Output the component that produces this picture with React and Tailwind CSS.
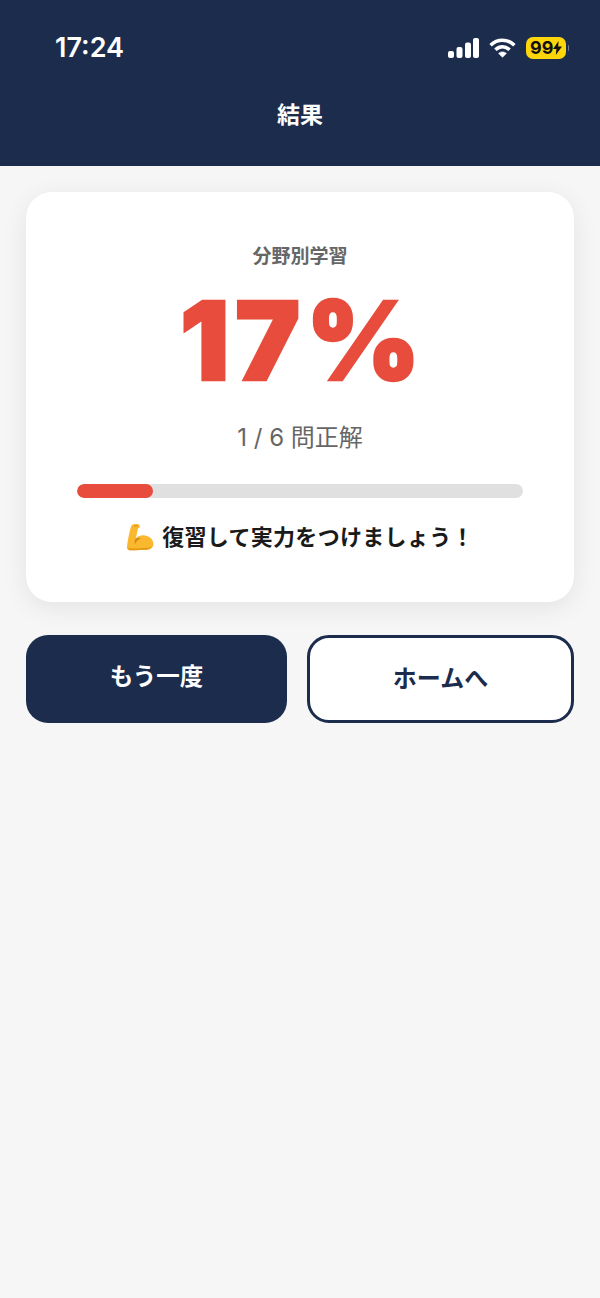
import React from 'react';

const jp = "font-['Inter','Noto_Sans_CJK_JP',sans-serif]";

const StatusIcons = () => (
    <div className="flex items-center gap-[10px]">
        <svg width="31" height="20" viewBox="0 0 31 20" fill="white">
            <rect x="0" y="13" width="6" height="7" rx="2" />
            <rect x="8.5" y="9" width="6" height="11" rx="2" />
            <rect x="17" y="4.5" width="6" height="15.5" rx="2" />
            <rect x="25" y="0" width="6" height="20" rx="2" />
        </svg>
        <svg width="27" height="20" viewBox="0 0 27 20" fill="none" stroke="white" strokeWidth="3.6">
            <path d="M1.6 7.2C8.6 .6 18.4 .6 25.4 7.2" />
            <path d="M6.4 11.8C10.6 7.8 16.4 7.8 20.6 11.8" />
            <path d="M13.5 19.2L9.6 15.4C11.8 13.4 15.2 13.4 17.4 15.4Z" fill="white" strokeWidth="0.6" />
        </svg>
        <div className="relative flex h-[22px] w-[40px] items-center rounded-[7px] bg-[#ffd60a] pl-[4px]">
            <span className="font-['Inter',sans-serif] text-[18px] font-bold leading-none text-[#111]">99</span>
            <svg width="9" height="14" viewBox="0 0 9 14" fill="#111">
                <path d="M5.6 0L0 8h3.4L2.8 14 9 5.6H5.2Z" />
            </svg>
            <div className="absolute -right-[3px] top-[8px] h-[6px] w-[1.5px] rounded-r bg-[#6f7c93]" />
        </div>
    </div>
);

const ArmIcon = () => (
    <svg width="28" height="28" viewBox="0 0 28 28">
        <path d="M7 1.5C9.5 .8 12.5 1 13.6 2.4 14.4 3.6 13.4 5 12 5.4L11 9.5C11 11 10.2 13.5 9.6 15.4 12.5 12.6 17 11.6 21 13 25.5 14.6 27.6 18 27.4 21.5 27.2 24.8 24.5 26.6 20.5 26.8 14 27.2 7.5 27.4 3.4 27.2 1.4 27 .6 25.6 1 23.5 1.8 17 3.4 9 5 3.6 5.4 2.6 6 1.8 7 1.5Z" fill="#f9b82e" />
        <path d="M9.6 15.4C8.6 17.6 8.4 19.6 8.8 21.4 9.8 18.6 12.2 16.4 15 15.4 13 15 11 15 9.6 15.4Z" fill="#d98a12" />
        <path d="M2 25C8 25.8 18 25.6 25.8 24 24 26 22 26.7 20 26.8 14 27.2 7.5 27.4 3.4 27.2 2.6 27 2.2 26 2 25Z" fill="#e79a16" />
        <path d="M8 3.4C9 2.8 10.4 2.6 11.6 3" stroke="#d98a12" strokeWidth="1" fill="none" />
    </svg>
);

export default function App() {
    return (
        <div className={`flex min-h-[1298px] flex-col bg-[#f6f6f6] ${jp}`}>
            {/* header */}
            <div className="h-[166px] bg-[#1b2c4d] text-white">
                <div className="flex h-[96px] items-center justify-between pl-[55px] pr-[34px]">
                    <span className="font-['Inter',sans-serif] text-[27px] font-semibold">17:24</span>
                    <StatusIcons />
                </div>
                <h1 className="text-center text-[23px] font-bold leading-[38px]">結果</h1>
            </div>

            <div className="flex flex-col gap-[33px] px-[26px] pt-[26px]">
                {/* result card */}
                <div className="flex h-[410px] flex-col items-center rounded-[26px] bg-white px-[51px] pt-[51px] shadow-[0_6px_26px_rgba(0,0,0,0.08)]">
                    <p className="text-[19px] font-bold leading-[28px] text-[#666]">分野別学習</p>
                    <p className="mt-[9px] pl-[6px] font-['Inter',sans-serif] text-[109px] font-black leading-[120px] tracking-[6px] text-[#e74c3c] [-webkit-text-stroke:2.5px_#e74c3c]">17%</p>
                    <p className="mt-[19px] text-[24px] leading-[38px] text-[#666]">1 / 6 問正解</p>
                    <div className="mt-[27px] h-[14px] w-full overflow-hidden rounded-full bg-[#e0e0e0]">
                        <div className="h-full w-[17%] rounded-full bg-[#e74c3c]" />
                    </div>
                    <div className="mt-[23px] flex items-center gap-[8px]">
                        <ArmIcon />
                        <span className="text-[22px] font-bold leading-[32px] tracking-[0.3px] text-[#1a1a1a]">復習して実力をつけましょう！</span>
                    </div>
                </div>

                {/* buttons */}
                <div className="flex h-[88px] gap-[20px]">
                    <button className="flex-1 rounded-[22px] bg-[#1b2c4d] pb-[5px] text-[23.5px] font-bold text-white">もう一度</button>
                    <button className="flex-1 rounded-[22px] border-[3px] border-[#1b2c4d] bg-white text-[24px] font-bold text-[#1b2c4d]">ホームへ</button>
                </div>
            </div>
        </div>
    );
}
